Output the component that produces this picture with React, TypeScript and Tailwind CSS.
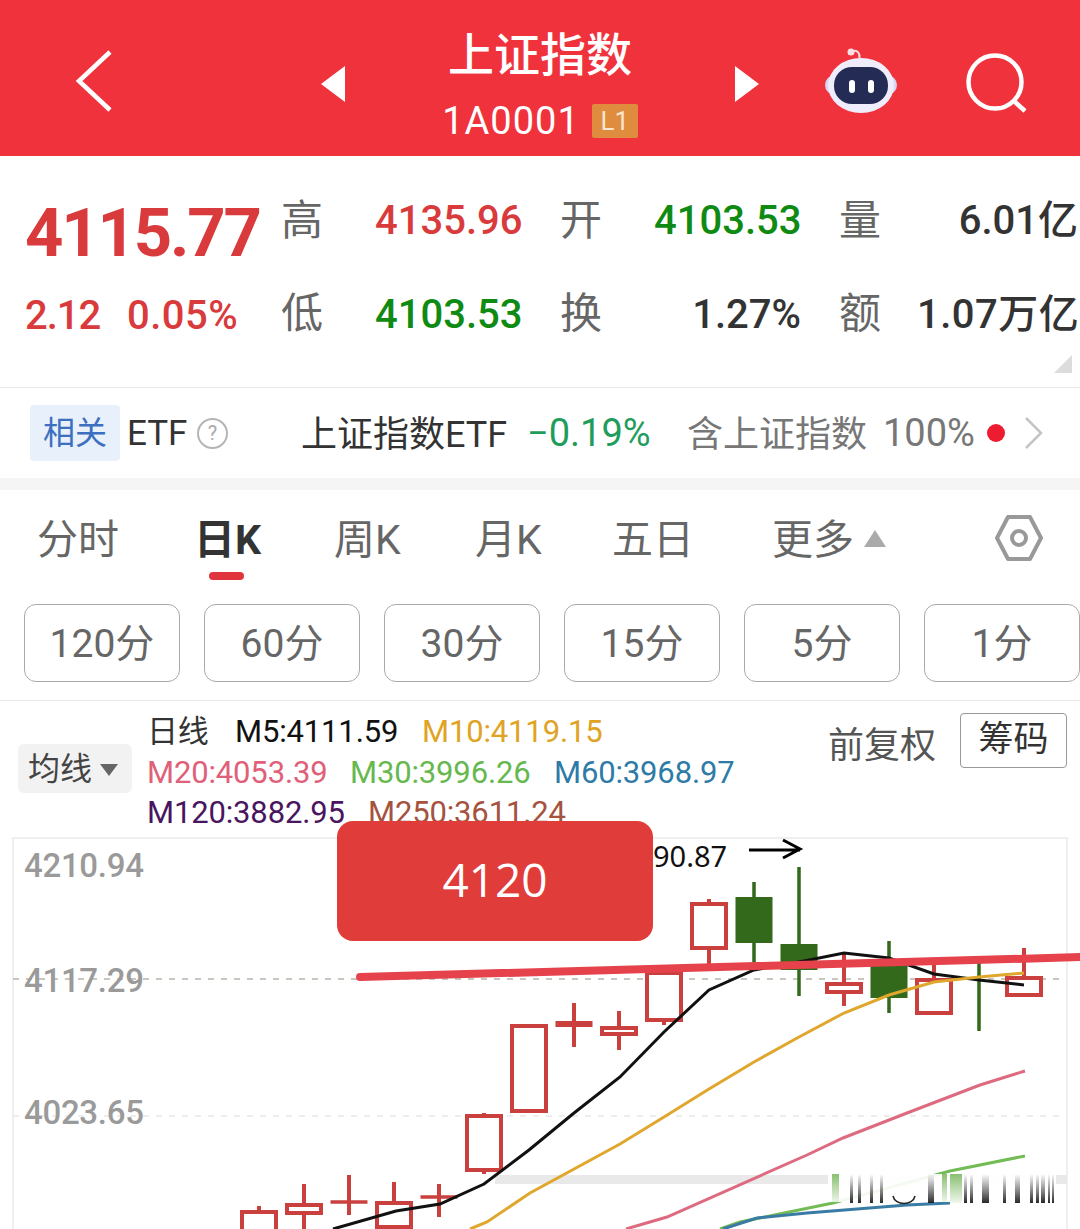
import React from 'react'

const FONT = "font-['Roboto','Noto_Sans_CJK_SC',sans-serif]"

const UP = '#c9403f'
const DOWN = '#33691a'

// Hollow red candles: x center, wick top/bottom, body top/bottom
const redCandles = [
  { x: 259, hi: 1206, lo: 1240, top: 1212, bottom: 1240 },
  { x: 304, hi: 1184, lo: 1240, top: 1205, bottom: 1213 },
  { x: 349, hi: 1175, lo: 1215, top: 1202, bottom: 1202 },
  { x: 394, hi: 1182, lo: 1240, top: 1203, bottom: 1227 },
  { x: 439, hi: 1184, lo: 1217, top: 1197, bottom: 1197 },
  { x: 484, hi: 1113, lo: 1174, top: 1116, bottom: 1170 },
  { x: 529, hi: 1026, lo: 1112, top: 1026, bottom: 1111 },
  { x: 574, hi: 1003, lo: 1047, top: 1024, bottom: 1024 },
  { x: 619, hi: 1011, lo: 1050, top: 1028, bottom: 1034 },
  { x: 664, hi: 972, lo: 1025, top: 973, bottom: 1020 },
  { x: 709, hi: 899, lo: 965, top: 904, bottom: 948 },
  { x: 844, hi: 953, lo: 1006, top: 984, bottom: 992 },
  { x: 934, hi: 965, lo: 1014, top: 980, bottom: 1013 },
  { x: 1024, hi: 948, lo: 996, top: 978, bottom: 995 },
]

const greenCandles = [
  { x: 754, hi: 882, lo: 962, top: 897, bottom: 943 },
  { x: 799, hi: 867, lo: 996, top: 944, bottom: 970 },
  { x: 889, hi: 941, lo: 1013, top: 960, bottom: 998 },
  { x: 979, hi: 963, lo: 1031, top: 979, bottom: 981 },
]

const smearBars = [
  [832, 7, 'url(#smearGreen)'],
  [850, 3, 'url(#smearDark)'],
  [858, 3, 'url(#smearDark)'],
  [870, 3, 'url(#smearDark)'],
  [880, 3, 'url(#smearDark)'],
  [928, 6, 'url(#smearDark)'],
  [942, 5, 'url(#smearGreen)'],
  [950, 12, 'url(#smearGreen)'],
  [964, 3, 'url(#smearDark)'],
  [970, 3, 'url(#smearDark)'],
  [982, 7, 'url(#smearDark)'],
  [1003, 3, 'url(#smearDark)'],
  [1015, 5, 'url(#smearDark)'],
  [1030, 3, 'url(#smearDark)'],
  [1036, 3, 'url(#smearDark)'],
  [1041, 4, 'url(#smearDark)'],
  [1048, 2, 'url(#smearDark)'],
  [1052, 2, 'url(#smearDark)'],
] as const

const KlineChart = () => (
  <svg viewBox="0 837 1080 392" className="absolute inset-0 h-full w-full" fill="none">
    <defs>
      <linearGradient id="smearDark" x1="0" y1="0" x2="0" y2="1">
        <stop offset="0" stopColor="#222" stopOpacity="0" />
        <stop offset="1" stopColor="#111" stopOpacity="0.9" />
      </linearGradient>
      <linearGradient id="smearGreen" x1="0" y1="0" x2="0" y2="1">
        <stop offset="0" stopColor="#6bb04c" stopOpacity="0.8" />
        <stop offset="1" stopColor="#6bb04c" stopOpacity="0.1" />
      </linearGradient>
    </defs>

    {/* grid */}
    <path d="M13 979H1063" stroke="#b9b4a8" strokeWidth="1.5" strokeDasharray="6 7" />
    <path d="M13 1116H1066" stroke="#e8e8e8" strokeWidth="1.5" strokeDasharray="6 7" />
    <rect x="495" y="1175" width="572" height="9" fill="#e9e9e9" />

    {/* candles */}
    {redCandles.map(c => (
      <g key={c.x} stroke={UP} strokeWidth="4">
        <path d={`M${c.x} ${c.hi}V${c.top}M${c.x} ${c.bottom}V${c.lo}`} />
        {c.top === c.bottom ? (
          <path d={`M${c.x - 18.5} ${c.top}H${c.x + 18.5}`} strokeWidth={c.x === 574 ? 6 : 3.5} />
        ) : (
          <rect x={c.x - 17} y={c.top} width="34" height={c.bottom - c.top} fill="#fff" />
        )}
      </g>
    ))}
    {greenCandles.map(c => (
      <g key={c.x}>
        <path d={`M${c.x} ${c.hi}V${c.lo}`} stroke={DOWN} strokeWidth="3.5" />
        {c.x !== 979 && <rect x={c.x - 18.5} y={c.top} width="37" height={c.bottom - c.top} fill={DOWN} />}
      </g>
    ))}

    {/* moving averages */}
    <polyline
      points="333,1229 396,1211 440,1204 484,1184 529,1150 574,1113 620,1077 664,1032 709,990 754,970 799,962 844,953 889,958 934,974 979,980 1024,985"
      stroke="#111"
      strokeWidth="3"
    />
    <polyline
      points="470,1229 487,1222 530,1193 620,1144 664,1117 709,1089 754,1062 799,1037 844,1013 889,995 934,982 979,977 1024,973"
      stroke="#e0a72e"
      strokeWidth="3"
    />
    <polyline
      points="626,1229 667,1217 807,1155 843,1138 907,1113 980,1085 1025,1071"
      stroke="#de6a80"
      strokeWidth="3"
    />
    <polyline points="720,1229 740,1222 833,1203 950,1171 1025,1156" stroke="#73bb55" strokeWidth="3" />
    <polyline points="723,1229 757,1218 807,1213 907,1205 950,1203" stroke="#3a7ba5" strokeWidth="3" />

    {/* trend line drawn over the chart */}
    <path d="M360 977L1084 957" stroke="#e5424b" strokeWidth="8" strokeLinecap="round" />

    {/* arrow */}
    <path d="M749 850H800M783 840L800 849L783 858" stroke="#000" strokeWidth="3" />

    {/* smeared watermark */}
    <rect x="828" y="1174" width="228" height="28" fill="#fff" fillOpacity="0.92" />
    {smearBars.map(([x, w, fill]) => (
      <rect key={x} x={x} y="1174" width={w} height="29" fill={fill} />
    ))}
    <path d="M893 1196C895 1206 913 1206 915 1196" stroke="#222" strokeWidth="1.5" />
  </svg>
)

const RobotIcon = () => (
  <svg width="72" height="68" viewBox="0 0 72 68" className="mt-[6px]">
    <circle cx="26" cy="5" r="3.5" fill="#f6dfe6" />
    <path d="M28 4C33 3 35 7 34.5 11" stroke="#f6dfe6" strokeWidth="2" fill="none" />
    <rect x="0" y="28" width="72" height="20" rx="10" fill="#d9d6f5" />
    <ellipse cx="36" cy="38.5" rx="33" ry="27.5" fill="#efedfb" />
    <rect x="9" y="20" width="54" height="37" rx="18" fill="#242c55" />
    <rect x="24" y="33" width="6" height="13" rx="3" fill="#fff" />
    <rect x="43" y="33" width="6" height="13" rx="3" fill="#fff" />
  </svg>
)

const periods = ['120分', '60分', '30分', '15分', '5分', '1分']

export default function App() {
  return (
    <div className={`${FONT} relative flex h-[1229px] w-[1080px] flex-col overflow-hidden bg-white`}>
      {/* Header */}
      <header className="flex h-[156px] shrink-0 items-center bg-[#f0323c] text-white">
        <svg width="38" height="64" viewBox="0 0 38 64" className="ml-[75px] mt-[6px]" fill="none">
          <path d="M35 3L4 32L35 61" stroke="#fff" strokeWidth="4.5" />
        </svg>
        <div className="ml-[208px] mt-[12px] h-0 w-0 border-y-[18px] border-r-[24px] border-y-transparent border-r-white" />
        <div className="ml-[99px] mt-[15px] flex w-[192px] flex-col items-center">
          <div className="text-[46px] leading-[54px] font-medium whitespace-nowrap">上证指数</div>
          <div className="mt-[17px] flex items-center">
            <span className="text-[38px] leading-[44px] whitespace-nowrap tracking-[1px]">1A0001</span>
            <span className="ml-[12px] flex h-[34px] w-[46px] items-center justify-center rounded-[2px] bg-[#e08c3e] text-[26px] text-[#f7e5d0]">
              L1
            </span>
          </div>
        </div>
        <div className="ml-[99px] mt-[12px] h-0 w-0 border-y-[18px] border-l-[24px] border-y-transparent border-l-white" />
        <div className="ml-[66px]">
          <RobotIcon />
        </div>
        <svg width="62" height="62" viewBox="0 0 62 62" className="ml-[68px] mt-[8px]" fill="none">
          <circle cx="30" cy="31" r="26.5" stroke="#fff" strokeWidth="4.5" />
          <path d="M50 51L60 60" stroke="#fff" strokeWidth="4.5" />
        </svg>
      </header>

      {/* Quote */}
      <section className="relative h-[232px] shrink-0 border-b border-[#e8e8e8] pl-[25px]">
        <div className="grid grid-cols-[256px_94px_185px_94px_185px_78px_161px] grid-rows-[127px_62px] whitespace-nowrap">
          <div className="self-center pt-[27px] text-[67px] leading-none font-bold tracking-[-2.2px] text-[#d93a3c]">4115.77</div>
          <div className="self-center pt-[2px] text-[42px] leading-none text-[#666]">高</div>
          <div className="self-center pt-[3px] text-[40px] leading-none font-medium text-[#d93a3c]">4135.96</div>
          <div className="self-center pt-[2px] text-[42px] leading-none text-[#666]">开</div>
          <div className="self-center pt-[3px] text-[40px] leading-none font-medium text-[#0f8a12]">4103.53</div>
          <div className="self-center pt-[2px] text-[42px] leading-none text-[#666]">量</div>
          <div className="self-center pt-[3px] text-right text-[40px] leading-none font-medium text-[#333]">6.01亿</div>

          <div className="flex items-center pt-[4px] text-[40px] leading-none font-medium text-[#d93a3c]">
            <span className="w-[102px] tracking-[-1px]">2.12</span>
            <span className="tracking-[0.5px]">0.05%</span>
          </div>
          <div className="self-center text-[42px] leading-none text-[#666]">低</div>
          <div className="self-center pt-[2px] text-[40px] leading-none font-medium text-[#0f8a12]">4103.53</div>
          <div className="self-center text-[42px] leading-none text-[#666]">换</div>
          <div className="self-center pt-[2px] pr-[38px] text-right text-[40px] leading-none font-medium text-[#333]">1.27%</div>
          <div className="self-center text-[42px] leading-none text-[#666]">额</div>
          <div className="self-center pt-[2px] text-right text-[40px] leading-none font-medium tracking-[0.5px] text-[#333]">1.07万亿</div>
        </div>
        <div className="absolute right-[8px] bottom-[14px] h-0 w-0 border-l-[18px] border-l-transparent [border-bottom:18px_solid_#dcdcdc]" />
      </section>

      {/* Related ETF */}
      <section className="flex h-[90px] shrink-0 items-center whitespace-nowrap">
        <span className="ml-[30px] flex h-[56px] w-[90px] items-center justify-center rounded-[4px] bg-[#e8f0fb] text-[32px] text-[#3c6fc0]">
          相关
        </span>
        <span className="ml-[7px] w-[59px] pt-[3px] text-[35px] text-[#333]">ETF</span>
        <span className="ml-[11px] flex h-[31px] w-[31px] items-center justify-center rounded-full border-2 border-[#b5b5b5] text-[20px] text-[#aaa]">
          ?
        </span>
        <span className="ml-[73px] w-[207px] pt-[3px] text-[36px] text-[#333]">上证指数ETF</span>
        <span className="ml-[19px] w-[124px] text-[38px] text-[#1f9d5c]">−0.19%</span>
        <span className="ml-[36px] w-[179px] pt-[3px] text-[36px] text-[#777]">含上证指数</span>
        <span className="ml-[17px] w-[92px] text-[38px] text-[#777]">100%</span>
        <span className="ml-[12px] h-[18px] w-[18px] rounded-full bg-[#ee1c30]" />
        <svg width="20" height="34" viewBox="0 0 20 34" className="ml-[19px]" fill="none">
          <path d="M2 2L17 17L2 32" stroke="#c4c4c4" strokeWidth="2.5" />
        </svg>
      </section>
      <div className="h-[12px] shrink-0 bg-[#f5f5f5]" />

      {/* Period tabs */}
      <nav className="flex h-[114px] shrink-0 items-center whitespace-nowrap pb-[12px] text-[41px] text-[#666]">
        <span className="ml-[37px] w-[81px]">分时</span>
        <span className="relative ml-[76px] w-[66px] font-bold text-[#333]">
          日K
          <span className="absolute top-[62px] left-[15px] h-[8px] w-[35px] rounded-full bg-[#e0353c]" />
        </span>
        <span className="ml-[74px] w-[68px]">周K</span>
        <span className="ml-[73px] w-[67px]">月K</span>
        <span className="ml-[70px] w-[78px]">五日</span>
        <span className="ml-[82px] w-[80px]">更多</span>
        <span className="mt-[-6px] ml-[12px] h-0 w-0 border-x-[11px] border-b-[17px] border-x-transparent border-b-[#aaa]" />
        <svg width="50" height="48" viewBox="0 0 50 48" className="mt-[-6px] ml-[108px]" fill="none">
          <path d="M14 3H36L47 24L36 45H14L3 24Z" stroke="#999" strokeWidth="4" strokeLinejoin="round" />
          <circle cx="25" cy="24" r="7" stroke="#999" strokeWidth="4" />
        </svg>
      </nav>
      <div className="flex shrink-0 gap-[24px] overflow-hidden pl-[24px]">
        {periods.map(p => (
          <div
            key={p}
            className="flex h-[78px] w-[156px] shrink-0 items-center justify-center rounded-[12px] border border-[#aaa] pt-[2px] text-[39px] text-[#666]"
          >
            {p}
          </div>
        ))}
      </div>

      {/* Moving average legend */}
      <section className="mt-[18px] flex h-[137px] shrink-0 border-t border-[#e8e8e8]">
        <div className="mt-[43px] ml-[18px] flex h-[49px] w-[114px] items-center rounded-[6px] bg-[#f2f2f2] pl-[10px] text-[32px] text-[#444]">
          均线
          <span className="mt-[2px] ml-[8px] h-0 w-0 border-x-[9px] border-t-[12px] border-x-transparent border-t-[#666]" />
        </div>
        <div className="ml-[15px] w-[660px] pt-[11px] text-[31px] leading-[40.5px] tracking-[-0.15px] whitespace-nowrap">
          <div className="flex">
            <span className="w-[88px] text-[#333]">日线</span>
            <span className="w-[187px] text-[#111]">M5:4111.59</span>
            <span className="text-[#e0a324]">M10:4119.15</span>
          </div>
          <div className="flex">
            <span className="w-[203px] text-[#e0607a]">M20:4053.39</span>
            <span className="w-[204px] text-[#66b84f]">M30:3996.26</span>
            <span className="text-[#2e7ba8]">M60:3968.97</span>
          </div>
          <div className="flex">
            <span className="w-[221px] text-[#4a1560]">M120:3882.95</span>
            <span className="text-[#a5523f]">M250:3611.24</span>
          </div>
        </div>
        <span className="mt-[20px] ml-[21px] w-[108px] text-[36px] leading-[50px] whitespace-nowrap text-[#555]">前复权</span>
        <span className="mt-[12px] ml-[24px] flex h-[55px] w-[107px] items-center justify-center rounded-[4px] border border-[#999] text-[35px] text-[#333]">
          筹码
        </span>
      </section>

      {/* Chart */}
      <div className="relative flex-1">
        <div className="absolute top-0 right-[12px] bottom-[-4px] left-[12px] border-x-2 border-t-2 border-[#efefef]" />
        <KlineChart />
        <span className="absolute top-[9px] left-[24px] text-[33px] leading-[40px] font-medium tracking-[-0.3px] text-[#9a9a9a]">4210.94</span>
        <span className="absolute top-[124px] left-[24px] text-[33px] leading-[40px] font-medium tracking-[-0.3px] text-[#9a9a9a]">4117.29</span>
        <span className="absolute top-[256px] left-[24px] text-[33px] leading-[40px] font-medium tracking-[-0.3px] text-[#9a9a9a]">4023.65</span>
        <span className="absolute top-[0px] left-[653px] font-['Noto_Sans',sans-serif] text-[29px] leading-[38px] text-[#111]">90.87</span>
      </div>

      {/* Annotation box over the legend and chart */}
      <div className="absolute top-[821px] left-[337px] flex h-[120px] w-[316px] items-center justify-center rounded-[16px] bg-[#df3c3a] pb-[4px] font-['Open_Sans',sans-serif] text-[46px] text-white">
        4120
      </div>
    </div>
  )
}
